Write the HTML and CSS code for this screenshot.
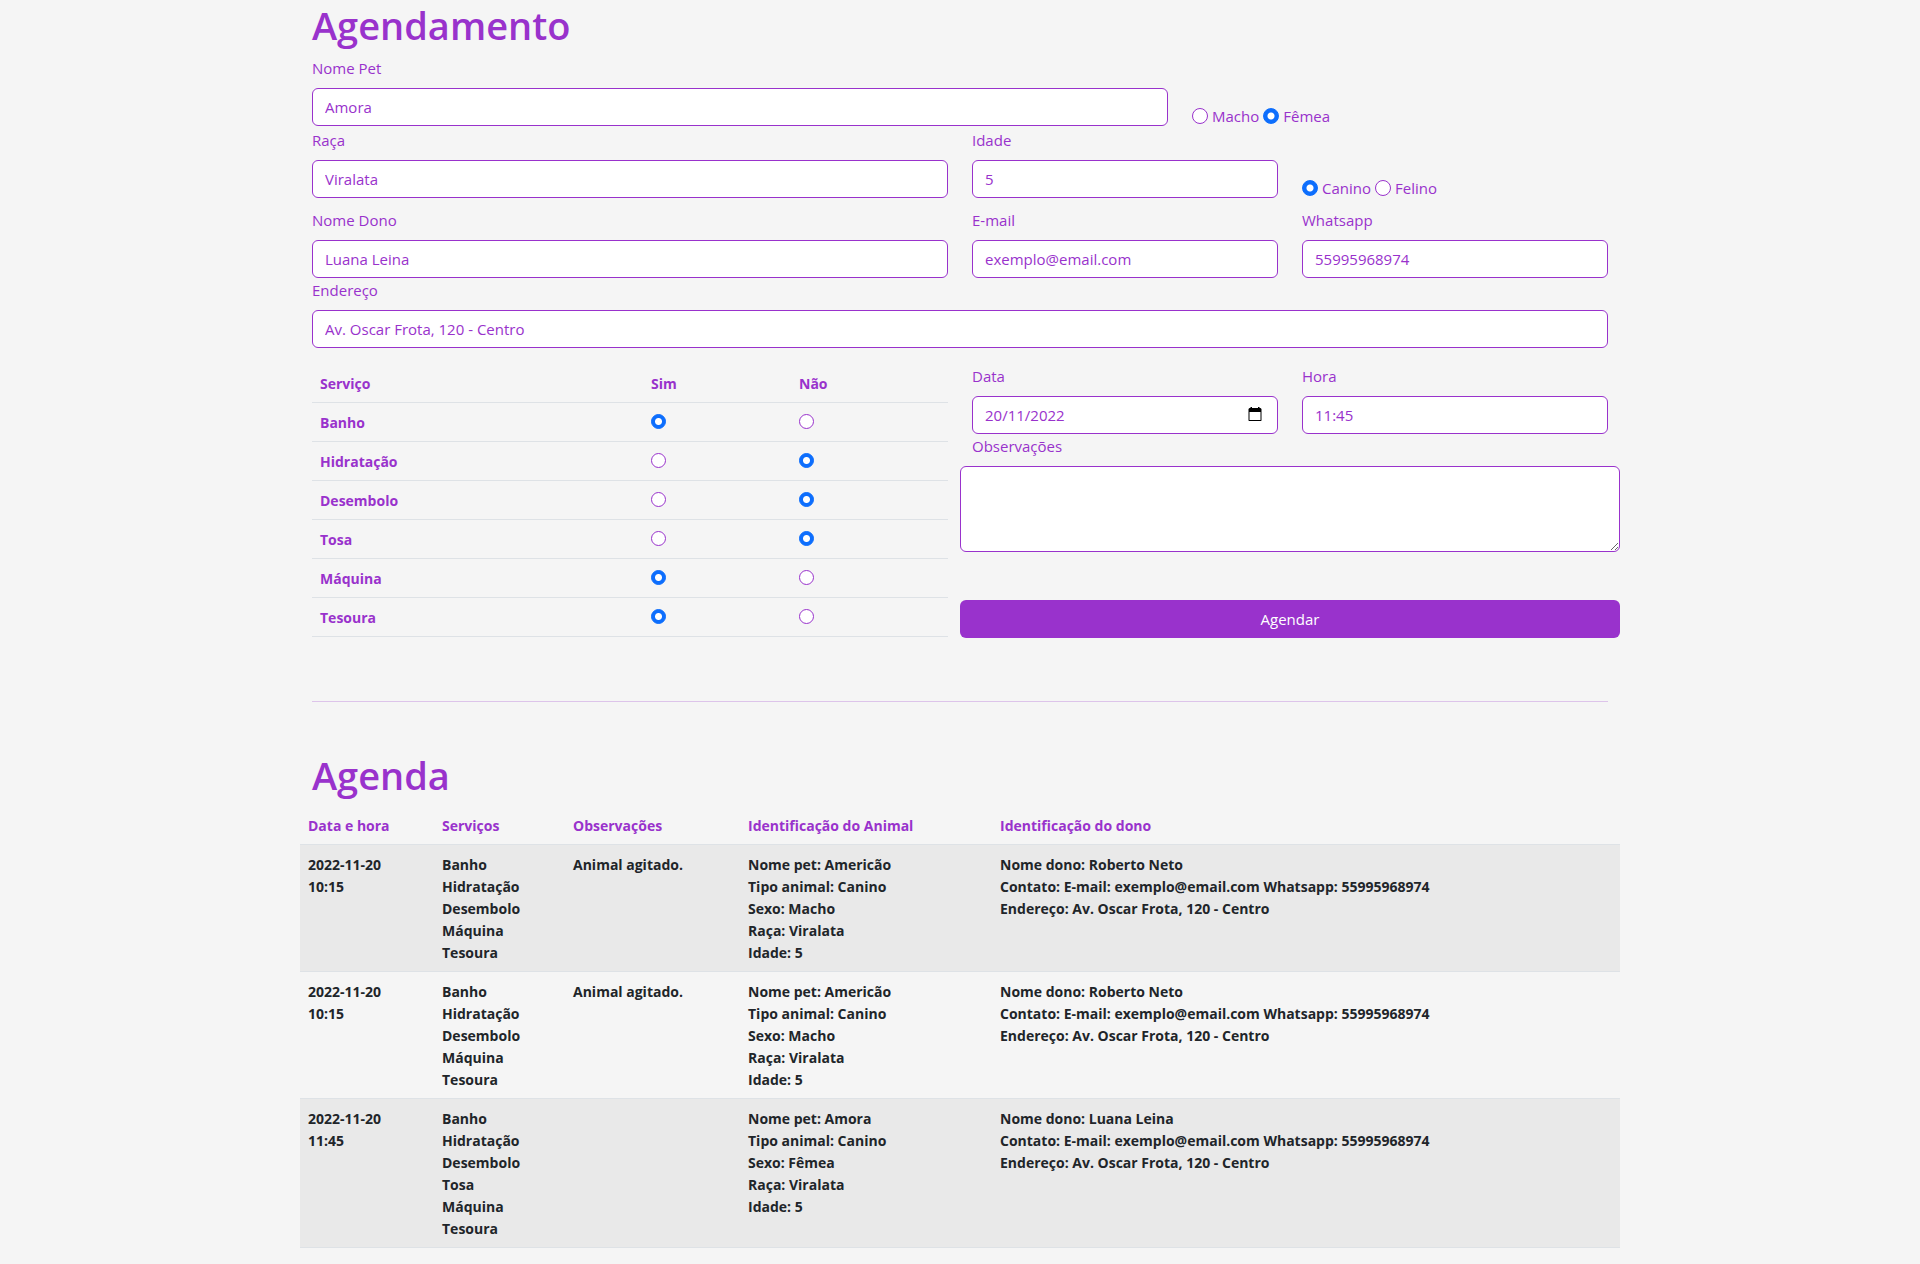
FILE: index.html
```html
<!DOCTYPE html>
<html lang="pt-BR">
<head>
<meta charset="utf-8">
<meta name="viewport" content="width=device-width, initial-scale=1">
<title>Agendamento</title>
<link rel="stylesheet" href="styles.css">
</head>
<body>
<main class="container">
  <h1 class="title">Agendamento</h1>
  <form>
    <div class="row">
      <div class="field span-8"><label for="pet">Nome Pet</label><input class="control" id="pet" type="text" value="Amora"></div>
      <div class="choices span-4">
        <input class="radio" type="radio" name="sexo" id="macho"><label for="macho">Macho</label>
        <input class="radio" type="radio" name="sexo" id="femea" checked><label for="femea">Fêmea</label>
      </div>
    </div>
    <div class="row row-spaced">
      <div class="field span-6"><label for="raca">Raça</label><input class="control" id="raca" type="text" value="Viralata"></div>
      <div class="field span-3"><label for="idade">Idade</label><input class="control" id="idade" type="text" value="5"></div>
      <div class="choices span-3">
        <input class="radio" type="radio" name="tipo" id="canino" checked><label for="canino">Canino</label>
        <input class="radio" type="radio" name="tipo" id="felino"><label for="felino">Felino</label>
      </div>
    </div>
    <div class="row">
      <div class="field span-6"><label for="dono">Nome Dono</label><input class="control" id="dono" type="text" value="Luana Leina"></div>
      <div class="field span-3"><label for="email">E-mail</label><input class="control" id="email" type="email" value="exemplo@email.com"></div>
      <div class="field span-3"><label for="whats">Whatsapp</label><input class="control" id="whats" type="tel" value="55995968974"></div>
    </div>
    <div class="row">
      <div class="field span-12"><label for="endereco">Endereço</label><input class="control" id="endereco" type="text" value="Av. Oscar Frota, 120 - Centro"></div>
    </div>
    <div class="row row-services">
      <div class="span-6">
        <table class="services">
          <thead><tr><th class="col-service" scope="col">Serviço</th><th class="col-yes" scope="col">Sim</th><th scope="col">Não</th></tr></thead>
          <tbody>
            <tr><th scope="row">Banho</th><td><input class="radio" type="radio" name="banho" aria-label="Banho: sim" checked></td><td><input class="radio" type="radio" name="banho" aria-label="Banho: não"></td></tr>
            <tr><th scope="row">Hidratação</th><td><input class="radio" type="radio" name="hidratacao" aria-label="Hidratação: sim"></td><td><input class="radio" type="radio" name="hidratacao" aria-label="Hidratação: não" checked></td></tr>
            <tr><th scope="row">Desembolo</th><td><input class="radio" type="radio" name="desembolo" aria-label="Desembolo: sim"></td><td><input class="radio" type="radio" name="desembolo" aria-label="Desembolo: não" checked></td></tr>
            <tr><th scope="row">Tosa</th><td><input class="radio" type="radio" name="tosa" aria-label="Tosa: sim"></td><td><input class="radio" type="radio" name="tosa" aria-label="Tosa: não" checked></td></tr>
            <tr><th scope="row">Máquina</th><td><input class="radio" type="radio" name="maquina" aria-label="Máquina: sim" checked></td><td><input class="radio" type="radio" name="maquina" aria-label="Máquina: não"></td></tr>
            <tr><th scope="row">Tesoura</th><td><input class="radio" type="radio" name="tesoura" aria-label="Tesoura: sim" checked></td><td><input class="radio" type="radio" name="tesoura" aria-label="Tesoura: não"></td></tr>
          </tbody>
        </table>
      </div>
      <div class="span-6">
        <div class="row-half">
          <div class="field">
            <label for="data">Data</label>
            <div class="date">
              <input class="control" id="data" type="text" inputmode="numeric" value="20/11/2022">
              <button class="date-button" type="button" aria-label="Abrir calendário"><svg width="14" height="16" viewBox="0 0 14 16" aria-hidden="true"><path fill="#000" fill-rule="evenodd" d="M2.500 1H4v1h6V1h1.500v1h1l1 1v11.500l-.5.500H1l-.5-.500V3l1-1h1zM1.500 6v8h11V6z"/></svg></button>
            </div>
          </div>
          <div class="field"><label for="hora">Hora</label><input class="control" id="hora" type="text" value="11:45"></div>
        </div>
        <div class="notes">
          <label for="obs">Observações</label>
          <textarea class="control notes-box" id="obs" rows="3"></textarea>
          <button class="submit" type="submit">Agendar</button>
        </div>
      </div>
    </div>
  </form>
  <hr class="divider">
  <h1 class="title">Agenda</h1>
  <table class="agenda">
    <thead>
      <tr><th class="col-date" scope="col">Data e hora</th><th class="col-jobs" scope="col">Serviços</th><th class="col-notes" scope="col">Observações</th><th class="col-pet" scope="col">Identificação do Animal</th><th scope="col">Identificação do dono</th></tr>
    </thead>
    <tbody>
      <tr>
        <td>2022-11-20<br>10:15</td>
        <td>Banho<br>Hidratação<br>Desembolo<br>Máquina<br>Tesoura</td>
        <td>Animal agitado.</td>
        <td>Nome pet: Americão<br>Tipo animal: Canino<br>Sexo: Macho<br>Raça: Viralata<br>Idade: 5</td>
        <td>Nome dono: Roberto Neto<br>Contato: E-mail: exemplo@email.com Whatsapp: 55995968974<br>Endereço: Av. Oscar Frota, 120 - Centro</td>
      </tr>
      <tr>
        <td>2022-11-20<br>10:15</td>
        <td>Banho<br>Hidratação<br>Desembolo<br>Máquina<br>Tesoura</td>
        <td>Animal agitado.</td>
        <td>Nome pet: Americão<br>Tipo animal: Canino<br>Sexo: Macho<br>Raça: Viralata<br>Idade: 5</td>
        <td>Nome dono: Roberto Neto<br>Contato: E-mail: exemplo@email.com Whatsapp: 55995968974<br>Endereço: Av. Oscar Frota, 120 - Centro</td>
      </tr>
      <tr>
        <td>2022-11-20<br>11:45</td>
        <td>Banho<br>Hidratação<br>Desembolo<br>Tosa<br>Máquina<br>Tesoura</td>
        <td></td>
        <td>Nome pet: Amora<br>Tipo animal: Canino<br>Sexo: Fêmea<br>Raça: Viralata<br>Idade: 5</td>
        <td>Nome dono: Luana Leina<br>Contato: E-mail: exemplo@email.com Whatsapp: 55995968974<br>Endereço: Av. Oscar Frota, 120 - Centro</td>
      </tr>
    </tbody>
  </table>
</main>
</body>
</html>
```
FILE: styles.css
```css
:root {
  --purple: #9932cc;
  --blue: #0d6efd;
  --line: #dee2e6;
}

*, *::before, *::after { box-sizing: border-box; }

body {
  margin: 0;
  background: #f5f5f5;
  color: var(--purple);
  font-family: "Segoe UI", "Open Sans", "Noto Sans", sans-serif;
  font-size: 15px;
  line-height: 24px;
}

.container {
  max-width: 1320px;
  margin: 0 auto;
  padding: 0 12px 16px;
}

.title {
  margin: 0 0 6px;
  font-size: 38px;
  font-weight: 600;
  line-height: 50px;
}

.row {
  display: grid;
  grid-template-columns: repeat(12, minmax(0, 1fr));
  column-gap: 24px;
}
.row-spaced { margin-bottom: 8px; }
.row-services { margin-top: 16px; }
.row-half {
  display: grid;
  grid-template-columns: repeat(2, minmax(0, 1fr));
  column-gap: 24px;
}
.span-3 { grid-column: span 3; }
.span-4 { grid-column: span 4; }
.span-6 { grid-column: span 6; }
.span-8 { grid-column: span 8; }
.span-12 { grid-column: span 12; }

.field label, .notes label {
  display: block;
  margin-bottom: 8px;
}

.control {
  display: block;
  width: 100%;
  height: 38px;
  padding: 6px 12px;
  border: 1px solid var(--purple);
  border-radius: 6px;
  background: #fff;
  color: var(--purple);
  font: inherit;
}

.choices {
  display: flex;
  align-items: center;
  gap: 4px;
  padding-top: 48px;
}

.radio {
  appearance: none;
  flex: none;
  width: 16px;
  height: 16px;
  margin: 0;
  border: 1px solid var(--purple);
  border-radius: 50%;
  background: #fff;
}
.radio:checked {
  border-color: var(--blue);
  background: radial-gradient(circle, #fff 3px, var(--blue) 4px);
}

table {
  width: 100%;
  border-collapse: collapse;
  table-layout: fixed;
  font-size: 14px;
  line-height: 22px;
}
th, td {
  padding: 9px 8px 7px;
  border-bottom: 1px solid var(--line);
  font-weight: 700;
  text-align: left;
  vertical-align: top;
}
.services .radio {
  display: block;
  width: 15px;
  height: 15px;
  margin-top: 2px;
}
.col-service { width: 331px; }
.col-yes { width: 148px; }

.date { position: relative; }
.date-button {
  position: absolute;
  top: 10px;
  right: 16px;
  padding: 0;
  border: 0;
  background: none;
  line-height: 0;
}

.notes { margin-right: -12px; margin-left: -12px; }
.notes label { margin-left: 12px; }
.notes-box {
  height: auto;
  resize: vertical;
}
.submit {
  width: 100%;
  height: 38px;
  margin-top: 48px;
  border: 0;
  border-radius: 6px;
  background: var(--purple);
  color: #fff;
  font: inherit;
}

.divider {
  height: 1px;
  margin: 63px 0 48px;
  border: 0;
  background: var(--purple);
  opacity: .25;
}

.agenda {
  width: calc(100% + 24px);
  margin: 0 -12px;
}
.agenda td { color: #212529; }
.agenda tbody tr:nth-child(odd) { background: #e9e9e9; }
.col-date { width: 134px; }
.col-jobs { width: 131px; }
.col-notes { width: 175px; }
.col-pet { width: 252px; }
```
